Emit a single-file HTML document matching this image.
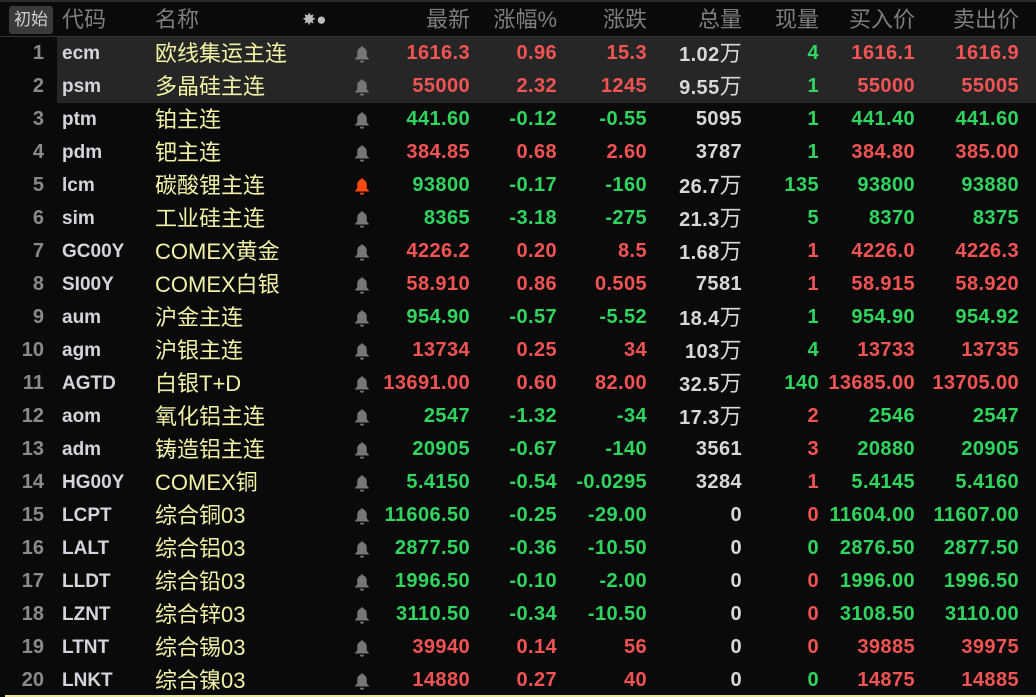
<!DOCTYPE html>
<html><head><meta charset="utf-8"><style>
body{margin:0;width:1036px;height:697px;background:#0a0a0a;overflow:hidden;font-family:"Liberation Sans","Noto Sans CJK SC",sans-serif;position:relative}
.r{position:absolute;left:0;width:1036px;height:33px}
.r span{position:absolute;top:0;line-height:33px;white-space:nowrap}
.hl{background:#262626;left:57px;width:979px}
.n{right:992px;color:#8a8a8a;font-size:20px;font-weight:bold;text-align:right}
.c{left:62px;color:#d4d4dc;font-size:19px;font-weight:bold}
.m{left:155px;color:#f2f2a6;font-size:22px}
.v{font-size:20px;font-weight:bold;text-align:right;letter-spacing:0.4px}
.p1{right:566px}.p2{right:479px}.p3{right:389px}.p4{right:294px;color:#d8d8d8}.p5{right:217px}.p6{right:121px}.p7{right:17px}
.g{color:#2fd55f}.d{color:#f25353}
.w{font-weight:normal;font-size:22px}
.h span{color:#7e7e7e;font-size:22px;line-height:36px}
svg.b{position:absolute;left:353px;top:8px}
</style></head><body>
<div style="position:absolute;left:0;top:0;width:1036px;height:2px;background:#2a2a2a"></div>
<div style="position:absolute;left:0;top:36px;width:1036px;height:1px;background:#333"></div>
<div style="position:absolute;left:5px;top:695px;width:1031px;height:2px;background:#e8e89a"></div>
<div class="r h" style="top:2px">
<span style="left:9px;top:4px;line-height:28px;height:28px;width:44px;background:#3a3a3a;border-radius:3px;color:#d0d0d0;font-size:17px;text-align:center">初始</span>
<span style="left:62px">代码</span><span style="left:155px">名称</span>
<span style="left:302px;font-size:17px;color:#bbb">✸●</span>
<span style="right:566px">最新</span><span style="right:479px">涨幅%</span><span style="right:389px">涨跌</span><span style="right:294px">总量</span><span style="right:217px">现量</span><span style="right:121px">买入价</span><span style="right:17px">卖出价</span>
</div>
<svg width="0" height="0" style="position:absolute"><defs><symbol id="bell" viewBox="0 0 16 16"><path d="M8 1.2c.8 0 1.2.5 1.2 1.1 2 .6 3 2.3 3 4.4v3.5l1.8 1.8v.9H2v-.9l1.8-1.8V6.7c0-2.1 1-3.8 3-4.4 0-.6.4-1.1 1.2-1.1zM6.2 14h3.6a1.8 1.8 0 0 1-3.6 0z"/></symbol></defs></svg>

<div class="r hl" style="top:37px;left:57px;width:979px"></div>
<div class="r hl" style="top:70px;left:57px;width:979px"></div>

<div class="r" style="top:37px"><span class="n">1</span><span class="c">ecm</span><span class="m">欧线集运主连</span><svg class="b" fill="#777" width="18" height="18"><use href="#bell"/></svg><span class="v p1 d">1616.3</span><span class="v p2 d">0.96</span><span class="v p3 d">15.3</span><span class="v p4">1.02<span class="w" style="position:static">万</span></span><span class="v p5 g">4</span><span class="v p6 d">1616.1</span><span class="v p7 d">1616.9</span></div>
<div class="r" style="top:70px"><span class="n">2</span><span class="c">psm</span><span class="m">多晶硅主连</span><svg class="b" fill="#777" width="18" height="18"><use href="#bell"/></svg><span class="v p1 d">55000</span><span class="v p2 d">2.32</span><span class="v p3 d">1245</span><span class="v p4">9.55<span class="w" style="position:static">万</span></span><span class="v p5 g">1</span><span class="v p6 d">55000</span><span class="v p7 d">55005</span></div>
<div class="r" style="top:103px"><span class="n">3</span><span class="c">ptm</span><span class="m">铂主连</span><svg class="b" fill="#777" width="18" height="18"><use href="#bell"/></svg><span class="v p1 g">441.60</span><span class="v p2 g">-0.12</span><span class="v p3 g">-0.55</span><span class="v p4">5095</span><span class="v p5 g">1</span><span class="v p6 g">441.40</span><span class="v p7 g">441.60</span></div>
<div class="r" style="top:136px"><span class="n">4</span><span class="c">pdm</span><span class="m">钯主连</span><svg class="b" fill="#777" width="18" height="18"><use href="#bell"/></svg><span class="v p1 d">384.85</span><span class="v p2 d">0.68</span><span class="v p3 d">2.60</span><span class="v p4">3787</span><span class="v p5 g">1</span><span class="v p6 d">384.80</span><span class="v p7 d">385.00</span></div>
<div class="r" style="top:169px"><span class="n">5</span><span class="c">lcm</span><span class="m">碳酸锂主连</span><svg class="b" fill="#ff4a10" width="18" height="18"><use href="#bell"/></svg><span class="v p1 g">93800</span><span class="v p2 g">-0.17</span><span class="v p3 g">-160</span><span class="v p4">26.7<span class="w" style="position:static">万</span></span><span class="v p5 g">135</span><span class="v p6 g">93800</span><span class="v p7 g">93880</span></div>
<div class="r" style="top:202px"><span class="n">6</span><span class="c">sim</span><span class="m">工业硅主连</span><svg class="b" fill="#777" width="18" height="18"><use href="#bell"/></svg><span class="v p1 g">8365</span><span class="v p2 g">-3.18</span><span class="v p3 g">-275</span><span class="v p4">21.3<span class="w" style="position:static">万</span></span><span class="v p5 g">5</span><span class="v p6 g">8370</span><span class="v p7 g">8375</span></div>
<div class="r" style="top:235px"><span class="n">7</span><span class="c">GC00Y</span><span class="m">COMEX黄金</span><svg class="b" fill="#777" width="18" height="18"><use href="#bell"/></svg><span class="v p1 d">4226.2</span><span class="v p2 d">0.20</span><span class="v p3 d">8.5</span><span class="v p4">1.68<span class="w" style="position:static">万</span></span><span class="v p5 d">1</span><span class="v p6 d">4226.0</span><span class="v p7 d">4226.3</span></div>
<div class="r" style="top:268px"><span class="n">8</span><span class="c">SI00Y</span><span class="m">COMEX白银</span><svg class="b" fill="#777" width="18" height="18"><use href="#bell"/></svg><span class="v p1 d">58.910</span><span class="v p2 d">0.86</span><span class="v p3 d">0.505</span><span class="v p4">7581</span><span class="v p5 d">1</span><span class="v p6 d">58.915</span><span class="v p7 d">58.920</span></div>
<div class="r" style="top:301px"><span class="n">9</span><span class="c">aum</span><span class="m">沪金主连</span><svg class="b" fill="#777" width="18" height="18"><use href="#bell"/></svg><span class="v p1 g">954.90</span><span class="v p2 g">-0.57</span><span class="v p3 g">-5.52</span><span class="v p4">18.4<span class="w" style="position:static">万</span></span><span class="v p5 g">1</span><span class="v p6 g">954.90</span><span class="v p7 g">954.92</span></div>
<div class="r" style="top:334px"><span class="n">10</span><span class="c">agm</span><span class="m">沪银主连</span><svg class="b" fill="#777" width="18" height="18"><use href="#bell"/></svg><span class="v p1 d">13734</span><span class="v p2 d">0.25</span><span class="v p3 d">34</span><span class="v p4">103<span class="w" style="position:static">万</span></span><span class="v p5 g">4</span><span class="v p6 d">13733</span><span class="v p7 d">13735</span></div>
<div class="r" style="top:367px"><span class="n">11</span><span class="c">AGTD</span><span class="m">白银T+D</span><svg class="b" fill="#777" width="18" height="18"><use href="#bell"/></svg><span class="v p1 d">13691.00</span><span class="v p2 d">0.60</span><span class="v p3 d">82.00</span><span class="v p4">32.5<span class="w" style="position:static">万</span></span><span class="v p5 g">140</span><span class="v p6 d">13685.00</span><span class="v p7 d">13705.00</span></div>
<div class="r" style="top:400px"><span class="n">12</span><span class="c">aom</span><span class="m">氧化铝主连</span><svg class="b" fill="#777" width="18" height="18"><use href="#bell"/></svg><span class="v p1 g">2547</span><span class="v p2 g">-1.32</span><span class="v p3 g">-34</span><span class="v p4">17.3<span class="w" style="position:static">万</span></span><span class="v p5 d">2</span><span class="v p6 g">2546</span><span class="v p7 g">2547</span></div>
<div class="r" style="top:433px"><span class="n">13</span><span class="c">adm</span><span class="m">铸造铝主连</span><svg class="b" fill="#777" width="18" height="18"><use href="#bell"/></svg><span class="v p1 g">20905</span><span class="v p2 g">-0.67</span><span class="v p3 g">-140</span><span class="v p4">3561</span><span class="v p5 d">3</span><span class="v p6 g">20880</span><span class="v p7 g">20905</span></div>
<div class="r" style="top:466px"><span class="n">14</span><span class="c">HG00Y</span><span class="m">COMEX铜</span><svg class="b" fill="#777" width="18" height="18"><use href="#bell"/></svg><span class="v p1 g">5.4150</span><span class="v p2 g">-0.54</span><span class="v p3 g">-0.0295</span><span class="v p4">3284</span><span class="v p5 d">1</span><span class="v p6 g">5.4145</span><span class="v p7 g">5.4160</span></div>
<div class="r" style="top:499px"><span class="n">15</span><span class="c">LCPT</span><span class="m">综合铜03</span><svg class="b" fill="#777" width="18" height="18"><use href="#bell"/></svg><span class="v p1 g">11606.50</span><span class="v p2 g">-0.25</span><span class="v p3 g">-29.00</span><span class="v p4">0</span><span class="v p5 d">0</span><span class="v p6 g">11604.00</span><span class="v p7 g">11607.00</span></div>
<div class="r" style="top:532px"><span class="n">16</span><span class="c">LALT</span><span class="m">综合铝03</span><svg class="b" fill="#777" width="18" height="18"><use href="#bell"/></svg><span class="v p1 g">2877.50</span><span class="v p2 g">-0.36</span><span class="v p3 g">-10.50</span><span class="v p4">0</span><span class="v p5 g">0</span><span class="v p6 g">2876.50</span><span class="v p7 g">2877.50</span></div>
<div class="r" style="top:565px"><span class="n">17</span><span class="c">LLDT</span><span class="m">综合铅03</span><svg class="b" fill="#777" width="18" height="18"><use href="#bell"/></svg><span class="v p1 g">1996.50</span><span class="v p2 g">-0.10</span><span class="v p3 g">-2.00</span><span class="v p4">0</span><span class="v p5 d">0</span><span class="v p6 g">1996.00</span><span class="v p7 g">1996.50</span></div>
<div class="r" style="top:598px"><span class="n">18</span><span class="c">LZNT</span><span class="m">综合锌03</span><svg class="b" fill="#777" width="18" height="18"><use href="#bell"/></svg><span class="v p1 g">3110.50</span><span class="v p2 g">-0.34</span><span class="v p3 g">-10.50</span><span class="v p4">0</span><span class="v p5 d">0</span><span class="v p6 g">3108.50</span><span class="v p7 g">3110.00</span></div>
<div class="r" style="top:631px"><span class="n">19</span><span class="c">LTNT</span><span class="m">综合锡03</span><svg class="b" fill="#777" width="18" height="18"><use href="#bell"/></svg><span class="v p1 d">39940</span><span class="v p2 d">0.14</span><span class="v p3 d">56</span><span class="v p4">0</span><span class="v p5 d">0</span><span class="v p6 d">39885</span><span class="v p7 d">39975</span></div>
<div class="r" style="top:664px"><span class="n">20</span><span class="c">LNKT</span><span class="m">综合镍03</span><svg class="b" fill="#777" width="18" height="18"><use href="#bell"/></svg><span class="v p1 d">14880</span><span class="v p2 d">0.27</span><span class="v p3 d">40</span><span class="v p4">0</span><span class="v p5 g">0</span><span class="v p6 d">14875</span><span class="v p7 d">14885</span></div>
</body></html>
